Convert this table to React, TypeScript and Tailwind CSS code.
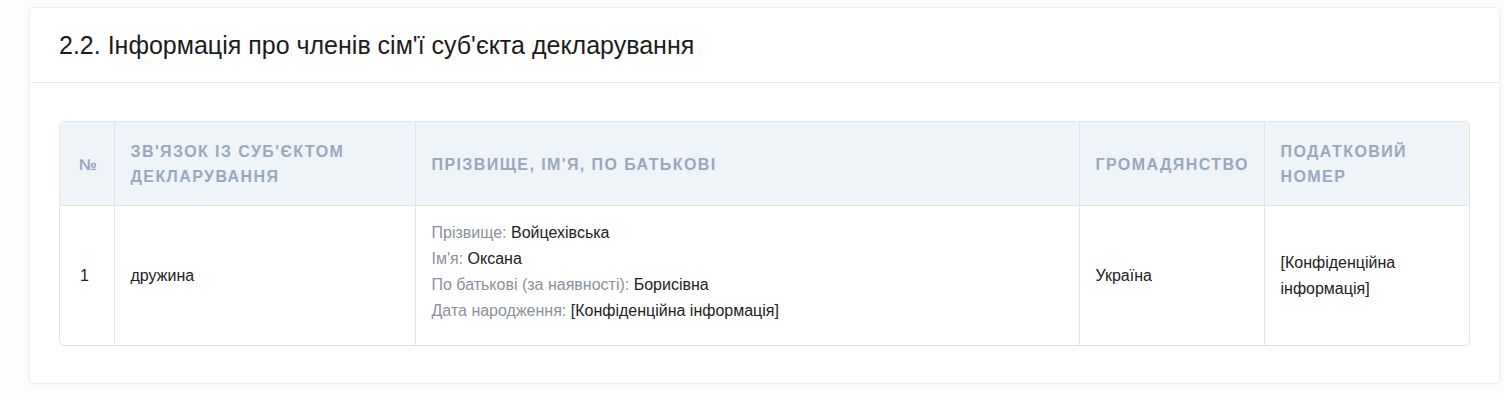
const font = { fontFamily: '"Liberation Sans", Arial, sans-serif' };

const head = "text-left align-middle px-4 pt-[17px] pb-[16px] text-[16px] font-bold uppercase tracking-[0.088em] leading-[25px] text-[#9aa8be]";
const cell = "align-middle px-4 text-[16px] leading-[26px] text-[#222]";

function Field(props: { label: string; value: string }) {
  return (
    <div>
      <span className="text-[#8b919b]">{props.label}: </span>
      {props.value}
    </div>
  );
}

export default function App() {
  return (
    <div className="min-h-[400px] bg-[#fdfdfd] pt-[7px] pl-[29px] pr-[4px]" style={font}>
      <div className="rounded-[4px] border border-[#eceef1] bg-white shadow-[0_1px_6px_rgba(0,0,0,0.04)]">
        <div className="border-b border-[#e6e8eb] px-[29px] py-[22px]">
          <h2 className="text-[25px] leading-[30px] text-[#1c1c1c]">
            2.2. Інформація про членів сім'ї суб'єкта декларування
          </h2>
        </div>
        <div className="px-[29px] pt-[38px] pb-[37px]">
          <div className="overflow-hidden rounded-[5px] border border-[#dfe4ea]">
            <table className="w-full table-fixed border-collapse">
              <colgroup>
                <col className="w-[54px]" />
                <col className="w-[301px]" />
                <col className="w-[664px]" />
                <col className="w-[185px]" />
                <col />
              </colgroup>
              <thead className="bg-[#eff4f9]">
                <tr className="border-b border-[#dfe4ea]">
                  <th className={`${head} pl-[19px] pr-2 tracking-normal`}>№</th>
                  <th className={`${head} border-l border-[#dfe4ea]`}>Зв'язок із суб'єктом декларування</th>
                  <th className={`${head} border-l border-[#dfe4ea]`}>Прізвище, ім'я, по батькові</th>
                  <th className={`${head} border-l border-[#dfe4ea]`}>Громадянство</th>
                  <th className={`${head} border-l border-[#dfe4ea]`}>Податковий номер</th>
                </tr>
              </thead>
              <tbody>
                <tr>
                  <td className={`${cell} pl-[20px] pr-2`}>1</td>
                  <td className={`${cell} border-l border-[#dfe4ea]`}>дружина</td>
                  <td className={`${cell} border-l border-[#dfe4ea] pt-[14px] pb-[21px]`}>
                    <Field label="Прізвище" value="Войцехівська" />
                    <Field label="Ім'я" value="Оксана" />
                    <Field label="По батькові (за наявності)" value="Борисівна" />
                    <Field label="Дата народження" value="[Конфіденційна інформація]" />
                  </td>
                  <td className={`${cell} border-l border-[#dfe4ea]`}>Україна</td>
                  <td className={`${cell} border-l border-[#dfe4ea]`}>[Конфіденційна інформація]</td>
                </tr>
              </tbody>
            </table>
          </div>
        </div>
      </div>
    </div>
  );
}
